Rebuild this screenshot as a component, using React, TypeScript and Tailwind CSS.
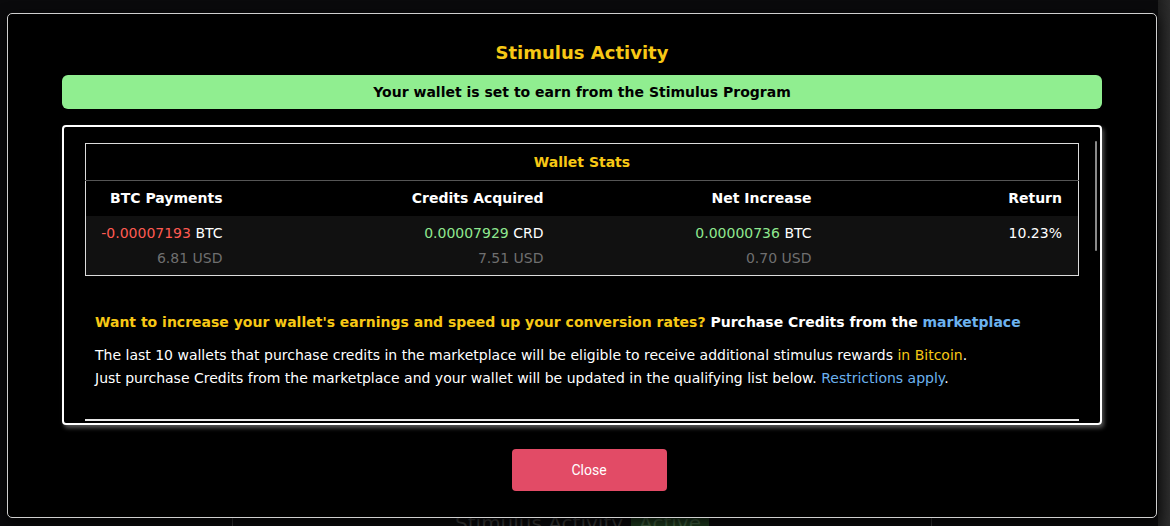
const verdana = { fontFamily: '"DejaVu Sans", Verdana, sans-serif' };

type Stat = { label: string; value: string; valueColor: string; unit: string; usd?: string; width: string };

const stats: Stat[] = [
  { label: "BTC Payments", value: "-0.00007193", valueColor: "text-[#ff5a52]", unit: "BTC", usd: "6.81 USD", width: "w-[153px]" },
  { label: "Credits Acquired", value: "0.00007929", valueColor: "text-[#8fe88f]", unit: "CRD", usd: "7.51 USD", width: "w-[321px]" },
  { label: "Net Increase", value: "0.00000736", valueColor: "text-[#8fe88f]", unit: "BTC", usd: "0.70 USD", width: "w-[268px]" },
  { label: "Return", value: "10.23%", valueColor: "text-white", unit: "", width: "" },
];

function WalletStats() {
  return (
    <table className="w-full border border-[#dcdcdc] border-collapse text-[14px]">
      <thead>
        <tr className="border-b border-[#555]">
          <th colSpan={4} className="h-[37px] text-center font-bold text-[#f7c815]">
            Wallet Stats
          </th>
        </tr>
        <tr className="bg-black">
          {stats.map((s) => (
            <th key={s.label} className={`h-[35px] pr-4 text-right font-bold text-white ${s.width}`}>
              {s.label}
            </th>
          ))}
        </tr>
      </thead>
      <tbody>
        <tr className="bg-[#111]">
          {stats.map((s) => (
            <td key={s.label} className="h-[60px] pr-4 text-right align-top pt-[8px]">
              <div className="leading-[19px]">
                <span className={s.valueColor}>{s.value}</span>
                {s.unit && <span className="text-white"> {s.unit}</span>}
              </div>
              {s.usd && <div className="mt-[6px] leading-[19px] text-[#6f6f6f]">{s.usd}</div>}
            </td>
          ))}
        </tr>
      </tbody>
    </table>
  );
}

function Backdrop() {
  return (
    <div className="relative h-[526px] w-full overflow-hidden bg-[#0a0a0c]">
      <div className="absolute right-0 top-0 h-full w-[12px] bg-gradient-to-r from-[#1e1e1e] to-[#2c2c2c]" />
      <div className="absolute left-[232px] top-[505px] flex h-[40px] w-[700px] items-start justify-center gap-2 border-x border-[#333] pt-[3px]">
        <span className="text-[20px] text-[#3a3a3a]" style={verdana}>Stimulus Activity</span>
        <span className="bg-[#1d3a1d] px-2 text-[20px] text-[#3f5f3f]" style={verdana}>Active</span>
      </div>
    </div>
  );
}

export default function App() {
  return (
    <div className="relative h-[526px] w-[1170px] overflow-hidden" style={verdana}>
      <Backdrop />
      <div className="absolute left-[7px] top-[13px] flex h-[505px] w-[1150px] flex-col items-center rounded-[5px] border border-[#cfcfcf] bg-black px-[54px] pt-[28px] shadow-[0_4px_14px_rgba(0,0,0,0.8)]">
        <h2 className="text-[18px] font-bold leading-[22px] text-[#f7c815]">Stimulus Activity</h2>
        <div className="mt-[11px] flex h-[34px] w-full items-center justify-center rounded-[6px] bg-[#90ee90] text-[14px] font-bold text-black">
          Your wallet is set to earn from the Stimulus Program
        </div>
        <div className="relative mt-[16px] h-[300px] w-full overflow-hidden rounded-[4px] border-2 border-white shadow-[2px_3px_4px_rgba(120,120,120,0.7)]">
          <div className="pl-[21px] pr-[21px] pt-[16px]">
            <WalletStats />
            <div className="px-[10px] pt-[37px] text-[14px]">
              <p className="font-bold leading-[18px]">
                <span className="text-[#f7c815]">Want to increase your wallet's earnings and speed up your conversion rates?</span>{" "}
                <span className="text-white">Purchase Credits from the</span>{" "}
                <span className="text-[#6cb2ef]">marketplace</span>
              </p>
              <p className="mt-[13px] leading-[23px] text-white">
                The last 10 wallets that purchase credits in the marketplace will be eligible to receive additional stimulus rewards{" "}
                <span className="text-[#f7c815]">in Bitcoin</span>.
                <br />
                Just purchase Credits from the marketplace and your wallet will be updated in the qualifying list below.{" "}
                <span className="text-[#6cb2ef]">Restrictions apply</span>.
              </p>
            </div>
            <div className="mt-[29px] h-[2px] w-full bg-[#e6e6e6]" />
          </div>
          <div className="absolute right-[3px] top-[14px] h-[110px] w-[2px] rounded bg-[#8a8a8a]" />
        </div>
        <button
          className="ml-[14px] mt-[24px] h-[42px] w-[155px] rounded-[4px] bg-[#e24b66] text-[14px] text-white"
          style={{ fontFamily: 'Roboto, "Liberation Sans", sans-serif' }}
        >
          Close
        </button>
      </div>
    </div>
  );
}
